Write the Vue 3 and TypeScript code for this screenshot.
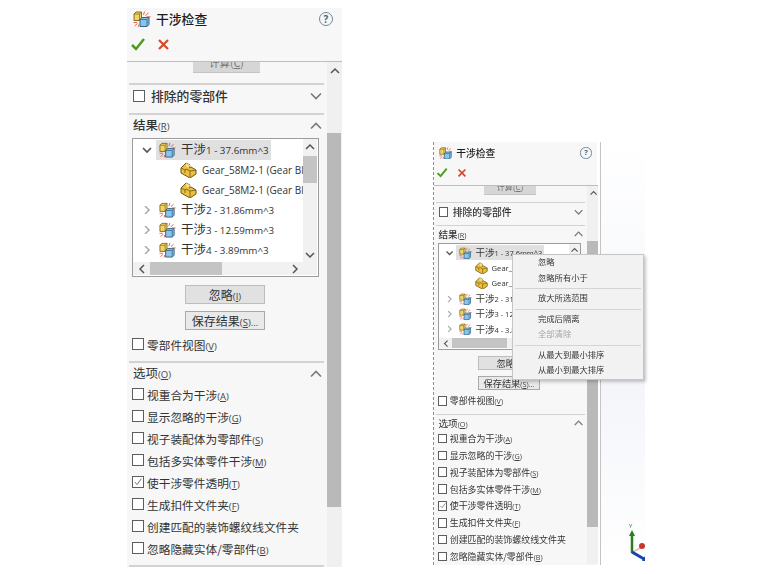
<script setup lang="ts">
interface Opt { text: string; key: string; checked?: boolean }

const panels = ['main', 'small']

const rows = [
  { text: '干涉', rest: '1 - 37.6mm^3', open: true },
  { part: true, text: 'Gear_58M2-1 (Gear Blank)' },
  { part: true, text: 'Gear_58M2-1 (Gear Blank)' },
  { text: '干涉', rest: '2 - 31.86mm^3' },
  { text: '干涉', rest: '3 - 12.59mm^3' },
  { text: '干涉', rest: '4 - 3.89mm^3' },
]

const options: Opt[] = [
  { text: '视重合为干涉', key: 'A' },
  { text: '显示忽略的干涉', key: 'G' },
  { text: '视子装配体为零部件', key: 'S' },
  { text: '包括多实体零件干涉', key: 'M' },
  { text: '使干涉零件透明', key: 'T', checked: true },
  { text: '生成扣件文件夹', key: 'F' },
  { text: '创建匹配的装饰螺纹线文件夹', key: '' },
  { text: '忽略隐藏实体/零部件', key: 'B' },
]

const menu = [
  [{ text: '忽略' }, { text: '忽略所有小于' }],
  [{ text: '放大所选范围' }],
  [{ text: '完成后隔离' }, { text: '全部清除', off: true }],
  [{ text: '从最大到最小排序' }, { text: '从最小到最大排序' }],
]
</script>

<template>
  <div class="page">
    <svg class="defs">
      <symbol id="clash" viewBox="0 0 18 16">
        <path d="M1 3l2-2h5.500v6l-2 2.500H1z" fill="#f4d263" stroke="#75621f" stroke-width=".9" />
        <path d="M1 3h5.500v6.500M6.500 3l2-2" fill="none" stroke="#75621f" stroke-width=".7" />
        <path d="M7 8.500l2-2h7v7l-2 2H7z" fill="#8cc3e6" stroke="#1f5a80" stroke-width=".9" />
        <path d="M7 8.500h7v7M14 8.500l2-2" fill="none" stroke="#1f5a80" stroke-width=".7" />
        <path d="M10.500 4l1-3.500M12.500 4.500l3-2.500M13.500 5.800h4M.5 11.500h3.500M1.500 15l3-2.500M5.500 15.800l.5-2.500" stroke="#e2533d" stroke-width=".9" fill="none" />
      </symbol>
      <symbol id="part" viewBox="0 0 17 16">
        <path d="M1 6l5-5 4 2-1 3 2-1 5 3v4l-6 4-9-5z" fill="#ecbf3d" stroke="#6f5812" stroke-width="1" stroke-linejoin="round" />
        <path d="M1 6l4 2 1-1 4 2v6M10 9l6-1M5 8v3" fill="none" stroke="#6f5812" stroke-width=".8" />
        <path d="M6 1l4 2-1 3-3-1.500z" fill="#f7dd83" />
      </symbol>
    </svg>

    <div v-for="p in panels" :key="p" class="shell" :class="p">
      <div class="panel">
        <header class="head">
          <div class="title-row">
            <svg class="title-icon"><use href="#clash" /></svg>
            <span class="title">干涉检查</span>
            <span class="help">?</span>
          </div>
          <div class="actions">
            <svg width="16" height="14" viewBox="0 0 16 14"><path d="M2 8l4 4 8-10" fill="none" stroke="#4f9a1e" stroke-width="2.500" /></svg>
            <svg width="13" height="13" viewBox="0 0 13 13"><path d="M2 2l9 9M11 2l-9 9" fill="none" stroke="#d8452c" stroke-width="2.200" /></svg>
          </div>
        </header>

        <div class="body">
          <div class="content">
            <div class="calc">计算(<u>C</u>)</div>

            <section class="sec first">
              <div class="sec-head">
                <span class="box"></span>
                <span class="sec-name">排除的零部件</span>
                <svg class="chev" viewBox="0 0 12 8"><path d="M1 1.500l5 5 5-5" /></svg>
              </div>
            </section>

            <section class="sec">
              <div class="sec-head">
                <span class="sec-name">结果<small class="key">(<u>R</u>)</small></span>
                <svg class="chev" viewBox="0 0 12 8"><path d="M1 6.500l5-5 5 5" /></svg>
              </div>
              <div class="tree">
                <div class="tree-list">
                  <div v-for="(r, i) in rows" :key="i" class="tree-row" :class="{ child: r.part }">
                    <svg v-if="!r.part" class="twist" :class="{ open: r.open }" viewBox="0 0 12 8">
                      <path v-if="r.open" d="M2 2l4 4 4-4" />
                      <path v-else d="M4 0l4 4-4 4" />
                    </svg>
                    <div class="tree-item" :class="{ sel: r.open }">
                      <svg v-if="r.part" class="row-icon"><use href="#part" /></svg>
                      <svg v-else class="row-icon"><use href="#clash" /></svg>
                      <span class="row-text">{{ r.text }}<small v-if="r.rest">{{ r.rest }}</small></span>
                    </div>
                  </div>
                </div>
                <div class="vbar">
                  <svg class="arrow" viewBox="0 0 12 8"><path d="M2 6l4-4 4 4" /></svg>
                  <div class="vthumb"></div>
                  <svg class="arrow down" viewBox="0 0 12 8"><path d="M2 2l4 4 4-4" /></svg>
                </div>
                <div class="hbar">
                  <svg class="arrow-h" viewBox="0 0 8 12"><path d="M6 2l-4 4 4 4" /></svg>
                  <div class="hthumb"></div>
                  <svg class="arrow-h end" viewBox="0 0 8 12"><path d="M2 2l4 4-4 4" /></svg>
                </div>
              </div>
              <button class="btn">忽略<small class="key">(<u>I</u>)</small></button>
              <button class="btn alt">保存结果<small class="key">(<u>S</u>)...</small></button>
              <label class="check parts">
                <span class="box"></span>
                <span>零部件视图<small class="key">(<u>V</u>)</small></span>
              </label>
            </section>

            <section class="sec">
              <div class="sec-head">
                <span class="sec-name plain">选项<small class="key">(<u>O</u>)</small></span>
                <svg class="chev" viewBox="0 0 12 8"><path d="M1 6.500l5-5 5 5" /></svg>
              </div>
              <div class="opts">
                <label v-for="o in options" :key="o.text" class="check">
                  <span class="box">
                    <svg v-if="o.checked" viewBox="0 0 12 12"><path d="M2 6l3 3 5-7" fill="none" stroke="#666" stroke-width="1.100" /></svg>
                  </span>
                  <span>{{ o.text }}<small v-if="o.key" class="key">(<u>{{ o.key }}</u>)</small></span>
                </label>
              </div>
            </section>

            <section class="sec"></section>
          </div>

          <div class="track">
            <svg class="track-arrow" viewBox="0 0 12 8"><path d="M2 6l4-4 4 4" /></svg>
            <div class="thumb"></div>
          </div>
        </div>
      </div>

      <div v-if="p === 'small'" class="menu">
        <div v-for="(g, gi) in menu" :key="gi" class="menu-group">
          <div v-for="m in g" :key="m.text" class="menu-item" :class="{ off: 'off' in m }">{{ m.text }}</div>
        </div>
      </div>
    </div>

    <div class="canvas">
      <svg class="triad" width="24" height="40" viewBox="0 0 24 40">
        <text x="2" y="6" class="axis">Y</text>
        <path d="M15 25l-9 5" stroke="#f2b8b0" stroke-width="1.500" />
        <circle cx="15" cy="24" r="3" fill="#c9362c" />
        <path d="M5 31V13" stroke="#2c7d1e" stroke-width="2.500" />
        <path d="M5 8l3 6H2z" fill="#2c7d1e" />
        <path d="M5 30l12 7" stroke="#1546b0" stroke-width="3" />
        <path d="M21 39l-6 0 3-5z" fill="#1546b0" />
      </svg>
    </div>
  </div>
</template>

<style scoped>
.page {
  display: flex;
  align-items: flex-start;
  height: 574px;
  padding-left: 127px;
  box-sizing: border-box;
  overflow: hidden;
  font-family: "Noto Sans CJK SC", "Open Sans", sans-serif;
  color: #2a2a2a;
  filter: blur(.35px);
}
.defs { width: 0; height: 0; position: absolute; }

.shell { position: relative; background: #f7f7f7; overflow: visible; flex: none; }
.shell.main { width: 215px; height: 559px; margin-top: 8px; overflow: hidden; }
.shell.small {
  width: 168px;
  height: 423px;
  margin-top: 142px;
  margin-left: 91px;
  padding-top: 3px;
  box-sizing: border-box;
  border-left: 1px dashed #5b9bd5;
  border-right: 1px solid #c4c4c4;
  background: linear-gradient(to left, #fff 3px, #f7f7f7 3px);
}
.panel { width: 215px; height: 559px; overflow: hidden; display: flex; flex-direction: column; }
.small .panel { zoom: .765; height: 548px; }

.head { height: 54px; border-bottom: 1px solid #bdbdbd; flex: none; padding: 2px 0 0 6px; box-sizing: border-box; }
.title-row { display: flex; align-items: center; height: 17px; }
.title-icon { width: 18px; height: 16px; }
.title { margin-left: 5px; font-size: 12.800px; font-weight: 500; color: #1c1c1c; line-height: 16px; }
.help {
  margin-left: auto;
  margin-right: 9px;
  width: 12px;
  height: 12px;
  border: 1.500px solid #70879c;
  border-radius: 50%;
  color: #4c6478;
  font: 700 10px/12px "Open Sans", sans-serif;
  text-align: center;
}
.actions { display: flex; align-items: center; gap: 11px; margin: 10px 0 0 -3px; }

.body { flex: 1; display: flex; overflow: hidden; min-height: 0; }
.content { width: 200px; flex: none; }
.calc {
  width: 67px;
  height: 20px;
  margin: -9px 0 10px 66px;
  background: #d6d6d6;
  border-bottom: 1px solid #c4c4c4;
  box-sizing: border-box;
  text-align: center;
  font-size: 10.500px;
  line-height: 20px;
  color: #777;
}

.sec { margin-left: 2px; width: 195px; border-top: 2px solid #d2d2d2; }
.sec-head { height: 22px; display: flex; align-items: center; padding: 0 4px; margin-bottom: 4px; }
.sec-name { font-size: 12.500px; font-weight: 500; color: #333; line-height: 16px; }
.sec-name.plain { font-weight: 400; }
.first .sec-name { margin-left: 6px; font-size: 12.800px; }
.first .sec-head { margin-bottom: 6px; }
.chev { width: 12px; height: 8px; margin-left: auto; margin-right: -2px; fill: none; stroke: #7c7c7c; stroke-width: 1.700; }

.key { font-size: 9.500px; font-family: "Open Sans", sans-serif; color: #444; }

.box {
  width: 10px;
  height: 10px;
  border: 1px solid #5e5e5e;
  background: #fff;
  display: inline-block;
  flex: none;
}
.box svg { display: block; width: 10px; height: 10px; }

.tree {
  width: 187px;
  height: 139px;
  margin: -3px 0 8px 3px;
  border: 1px solid #9c9c9c;
  background: #fff;
  box-sizing: border-box;
  display: grid;
  grid-template-columns: 170px 14px;
  grid-template-rows: 123px 13px;
}
.tree-list { overflow: hidden; padding-top: 1px; }
.tree-row { display: flex; align-items: center; height: 20px; white-space: nowrap; padding-left: 8px; overflow: hidden; }
.tree-row.child { padding-left: 47px; }
.twist { width: 12px; height: 8px; flex: none; fill: none; stroke: #a8a8a8; stroke-width: 1.500; }
.twist.open { stroke: #555; stroke-width: 1.700; }
.tree-item { display: flex; align-items: center; height: 20px; margin-left: 3px; padding: 0 3px; flex: none; }
.child .tree-item { margin-left: 0; padding: 0; }
.tree-item.sel { background: #e0e0e0; width: 115px; box-sizing: border-box; }
.row-icon { width: 17px; height: 16px; flex: none; }
.row-text { margin-left: 5px; font-size: 12.500px; line-height: 16px; color: #333; }
.row-text small { font-size: 9.800px; font-family: "Open Sans", sans-serif; }
.child .row-text { font-size: 10px; font-family: "Open Sans", sans-serif; }

.vbar { grid-column: 2; grid-row: 1; background: #f1f1f1; position: relative; }
.arrow { position: absolute; left: 1px; top: 4px; width: 12px; height: 8px; fill: none; stroke: #555; stroke-width: 1.500; }
.arrow.down { top: auto; bottom: 3px; }
.vthumb { position: absolute; left: 0; right: 0; top: 17px; height: 27px; background: #c4c4c4; }
.hbar { grid-column: 1 / 3; grid-row: 2; background: #f1f1f1; position: relative; }
.hthumb { position: absolute; left: 17px; width: 72px; top: 0; bottom: 0; background: #c4c4c4; }
.arrow-h { position: absolute; left: 5px; top: 1px; width: 8px; height: 12px; fill: none; stroke: #555; stroke-width: 1.500; }
.arrow-h.end { left: auto; right: 18px; }

.btn {
  display: block;
  width: 80px;
  height: 19px;
  margin: 0 0 7px 56px;
  padding: 0;
  border: 1px solid #bdbdbd;
  background: #e1e1e1;
  font-family: inherit;
  font-size: 12px;
  line-height: 17px;
  color: #333;
  text-align: center;
}
.btn.alt { margin-bottom: 3px; background: #e9e9e9; border-color: #a9a9a9; }

.check { display: flex; align-items: center; gap: 3px; height: 22px; padding-left: 3px; font-size: 11.700px; color: #333; white-space: nowrap; }
.check.parts { margin-bottom: 6px; }
.opts { margin-top: -6px; margin-bottom: 6px; }

.track { width: 15px; flex: none; background: #f0f0f0; position: relative; }
.track-arrow { position: absolute; left: 2px; top: 5px; width: 12px; height: 8px; fill: none; stroke: #555; stroke-width: 1.500; }
.thumb { position: absolute; left: 0; right: 1px; top: 71px; height: 374px; background: #b9b9b9; }

.menu {
  position: absolute;
  left: 78px;
  top: 112px;
  width: 130px;
  background: #f2f2f2;
  border: 1px solid #c6c6c6;
  box-shadow: 2px 2px 3px rgba(0, 0, 0, .22);
  z-index: 2;
}
.menu-group + .menu-group { border-top: 1px solid #d4d4d4; margin: 2px 2px 0; padding-top: 2px; }
.menu-group + .menu-group .menu-item { margin-left: -2px; }
.menu-item { height: 15.500px; line-height: 13.500px; padding-left: 25px; font-size: 8.300px; color: #333; }
.menu-item.off { color: #a6a6a6; }

.canvas {
  width: 44px;
  height: 423px;
  margin-top: 142px;
  flex: none;
  background: linear-gradient(#ffffff, #f3f5fa 55%, #ffffff);
  position: relative;
  overflow: hidden;
}
.triad { position: absolute; left: 26px; top: 380px; }
.axis { font: 6px "Open Sans", sans-serif; fill: #2c7d1e; }
</style>

<style>
html, body { background: #fff; }
</style>
